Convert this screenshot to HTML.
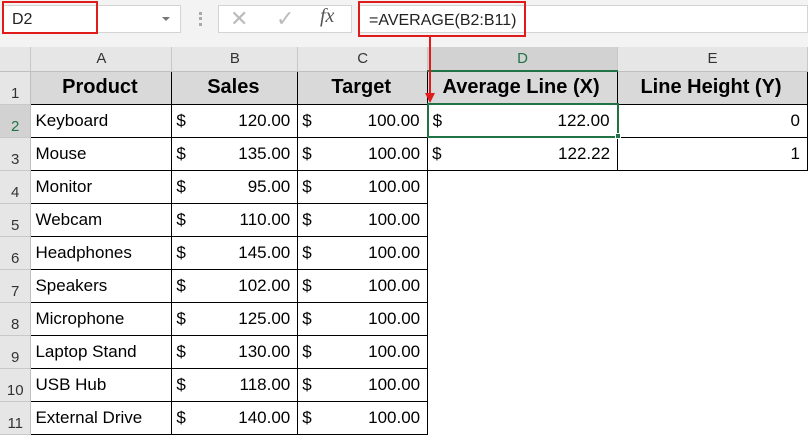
<!DOCTYPE html>
<html><head><style>
body{margin:0;width:808px;height:435px;overflow:hidden;background:#fff;font-family:"Liberation Sans",Arial,sans-serif;position:relative}
.a{position:absolute;box-sizing:border-box}
.top{left:0;top:0;width:808px;height:47px;background:#f3f3f3}
table{position:absolute;left:0;top:47px;border-collapse:collapse;table-layout:fixed}
td{padding:0;height:33px;font-size:17px;white-space:nowrap;overflow:hidden;box-sizing:border-box}
tr.ch td{height:24px;background:#e6e6e6;text-align:center;font-size:15px;color:#333;border-right:1px solid #c8c8c8;border-bottom:1px solid #bfbfbf}
td.rh{background:#e6e6e6;text-align:center;font-size:15px;color:#333;border-bottom:1px solid #c8c8c8;border-right:1px solid #bfbfbf;vertical-align:bottom;padding-bottom:2px}
tr.h td.c{background:#d9d9d9;font-weight:bold;font-size:20px;text-align:center;border:1px solid #000;height:33px}
td.c{border:1px solid #000;padding:0 7px 0 4px}
td.e{border:none}
.m{display:flex;justify-content:space-between}
</style></head><body>
<div class="a top"></div>
<div class="a" style="left:3px;top:5px;width:178px;height:28px;background:#fff;border:1px solid #d4d4d4"></div>
<div class="a" style="left:162px;top:17px;width:0;height:0;border-left:4px solid transparent;border-right:4px solid transparent;border-top:4px solid #777"></div>
<div class="a" style="left:2px;top:1px;width:96px;height:33px;border:2px solid #e01b1b;font-size:16px;padding:8px 0 0 8px;color:#222">D2</div>
<div class="a" style="left:199px;top:12px;width:3px;height:14px;border-left:3px dotted #aaa"></div>
<div class="a" style="left:218px;top:5px;width:134px;height:28px;background:#fff;border:1px solid #d4d4d4"></div>
<div class="a" style="left:230px;top:6px;font-size:22px;color:#bbb">✕</div>
<div class="a" style="left:276px;top:6px;font-size:22px;color:#bbb">✓</div>
<div class="a" style="left:320px;top:5px;font-size:20px;color:#555;font-family:'Liberation Serif',serif;font-style:italic">fx</div>
<div class="a" style="left:358px;top:5px;width:450px;height:28px;background:#fff;border:1px solid #d4d4d4"></div>
<div class="a" style="left:358px;top:1px;width:168px;height:36px;border:2px solid #e01b1b;font-size:16px;padding:9px 0 0 9px;color:#222">=AVERAGE(B2:B11)</div>
<table>
<colgroup><col style="width:31px"><col style="width:141px"><col style="width:126px"><col style="width:130px"><col style="width:190px"><col style="width:190px"></colgroup>
<tr class="ch"><td style="background:#e6e6e6"></td><td>A</td><td>B</td><td>C</td><td style="background:#d2d2d2;color:#217346;border-bottom:2px solid #217346">D</td><td>E</td></tr>
<tr class="h"><td class="rh">1</td><td class="c">Product</td><td class="c">Sales</td><td class="c">Target</td><td class="c">Average Line (X)</td><td class="c">Line Height (Y)</td></tr>
<tr><td class="rh" style="background:#d2d2d2;color:#217346">2</td><td class="c">Keyboard</td><td class="c"><div class="m"><span>$</span><span>120.00</span></div></td><td class="c"><div class="m"><span>$</span><span>100.00</span></div></td><td class="c" style="border:2px solid #217346"><div class="m"><span>$</span><span>122.00</span></div></td><td class="c" style="text-align:right">0</td></tr>
<tr><td class="rh">3</td><td class="c">Mouse</td><td class="c"><div class="m"><span>$</span><span>135.00</span></div></td><td class="c"><div class="m"><span>$</span><span>100.00</span></div></td><td class="c"><div class="m"><span>$</span><span>122.22</span></div></td><td class="c" style="text-align:right">1</td></tr>
<tr><td class="rh">4</td><td class="c">Monitor</td><td class="c"><div class="m"><span>$</span><span>95.00</span></div></td><td class="c"><div class="m"><span>$</span><span>100.00</span></div></td><td class="e"></td><td class="e"></td></tr>
<tr><td class="rh">5</td><td class="c">Webcam</td><td class="c"><div class="m"><span>$</span><span>110.00</span></div></td><td class="c"><div class="m"><span>$</span><span>100.00</span></div></td><td class="e"></td><td class="e"></td></tr>
<tr><td class="rh">6</td><td class="c">Headphones</td><td class="c"><div class="m"><span>$</span><span>145.00</span></div></td><td class="c"><div class="m"><span>$</span><span>100.00</span></div></td><td class="e"></td><td class="e"></td></tr>
<tr><td class="rh">7</td><td class="c">Speakers</td><td class="c"><div class="m"><span>$</span><span>102.00</span></div></td><td class="c"><div class="m"><span>$</span><span>100.00</span></div></td><td class="e"></td><td class="e"></td></tr>
<tr><td class="rh">8</td><td class="c">Microphone</td><td class="c"><div class="m"><span>$</span><span>125.00</span></div></td><td class="c"><div class="m"><span>$</span><span>100.00</span></div></td><td class="e"></td><td class="e"></td></tr>
<tr><td class="rh">9</td><td class="c">Laptop Stand</td><td class="c"><div class="m"><span>$</span><span>130.00</span></div></td><td class="c"><div class="m"><span>$</span><span>100.00</span></div></td><td class="e"></td><td class="e"></td></tr>
<tr><td class="rh">10</td><td class="c">USB Hub</td><td class="c"><div class="m"><span>$</span><span>118.00</span></div></td><td class="c"><div class="m"><span>$</span><span>100.00</span></div></td><td class="e"></td><td class="e"></td></tr>
<tr><td class="rh">11</td><td class="c">External Drive</td><td class="c"><div class="m"><span>$</span><span>140.00</span></div></td><td class="c"><div class="m"><span>$</span><span>100.00</span></div></td><td class="e"></td><td class="e"></td></tr>
</table>
<div class="a" style="left:429px;top:37px;width:2px;height:58px;background:#e01b1b"></div>
<div class="a" style="left:425px;top:93px;width:0;height:0;border-left:5px solid transparent;border-right:5px solid transparent;border-top:10px solid #e01b1b"></div>
<div class="a" style="left:615px;top:133px;width:6px;height:6px;background:#217346;border:1px solid #fff"></div>
</body></html>
